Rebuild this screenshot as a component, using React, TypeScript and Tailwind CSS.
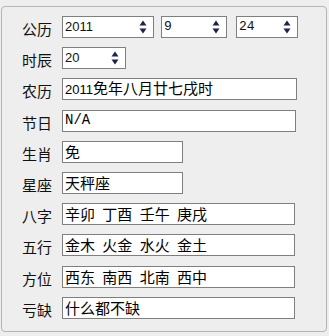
import React from "react"

const CJK = "font-['Noto_Sans_CJK_SC',sans-serif]"

function SpinArrows() {
  return (
    <svg width="8" height="14" viewBox="0 0 8 14" className="shrink-0">
      <path d="M4 0.5 L7.5 5.5 L0.5 5.5 Z" fill="#1f2347" />
      <path d="M0.5 8.5 L7.5 8.5 L4 13.5 Z" fill="#1f2347" />
    </svg>
  )
}

function SpinBox({ value, width, mono = false }: { value: string; width: string; mono?: boolean }) {
  return (
    <div className={`${width} h-[22px] border border-[#7f7f7f] bg-white flex items-center justify-between pl-[2px] pr-[6px]`}>
      <span
        className={
          mono
            ? "font-['Liberation_Mono',monospace] text-[13px] text-[#111]"
            : "font-['Liberation_Sans',sans-serif] text-[13px] text-[#111]"
        }
      >
        {value}
      </span>
      <SpinArrows />
    </div>
  )
}

function Field({ children, width }: { children: React.ReactNode; width: string }) {
  return (
    <div className={`${width} h-[22px] border border-[#7f7f7f] bg-white flex items-center pl-[2px] overflow-hidden`}>
      <span className={`${CJK} text-[15px] leading-[18px] text-black whitespace-pre [word-spacing:4px]`}>{children}</span>
    </div>
  )
}

function Row({ label, children }: { label: string; children: React.ReactNode }) {
  return (
    <div className="flex items-center h-[22px]">
      <div className={`${CJK} w-[30px] mr-[10px] text-[15px] leading-[18px] text-[#111] pt-[4px]`}>{label}</div>
      {children}
    </div>
  )
}

export default function App() {
  return (
    <div className="w-[329px] h-[336px] bg-[#eeeeee] pt-[6px] pl-[1px]">
      <div className="w-[326px] h-[326px] border border-[#b4b4b4] rounded-[4px] pt-[9px] pl-[20px] flex flex-col gap-[9.2px]">
        <Row label="公历">
          <SpinBox value="2011" width="w-[92px]" />
          <div className="w-[7px]" />
          <SpinBox value="9" width="w-[66px]" mono />
          <div className="w-[9px]" />
          <SpinBox value="24" width="w-[62px]" mono />
        </Row>
        <Row label="时辰">
          <SpinBox value="20" width="w-[64px]" />
        </Row>
        <Row label="农历">
          <Field width="w-[235px]">
            <span className="font-['Liberation_Sans',sans-serif] text-[13px]">2011</span>免年八月廿七戌时
          </Field>
        </Row>
        <Row label="节日">
          <div className="w-[234px] h-[22px] border border-[#7f7f7f] bg-white flex items-center pl-[2px]">
            <span className="font-['Liberation_Mono',monospace] text-[14px] text-black">N/A</span>
          </div>
        </Row>
        <Row label="生肖">
          <Field width="w-[121px]">免</Field>
        </Row>
        <Row label="星座">
          <Field width="w-[121px]">天秤座</Field>
        </Row>
        <Row label="八字">
          <Field width="w-[233px]">辛卯 丁酉 壬午 庚戌</Field>
        </Row>
        <Row label="五行">
          <Field width="w-[233px]">金木 火金 水火 金土</Field>
        </Row>
        <Row label="方位">
          <Field width="w-[233px]">西东 南西 北南 西中</Field>
        </Row>
        <Row label="亏缺">
          <Field width="w-[233px]">什么都不缺</Field>
        </Row>
      </div>
    </div>
  )
}
